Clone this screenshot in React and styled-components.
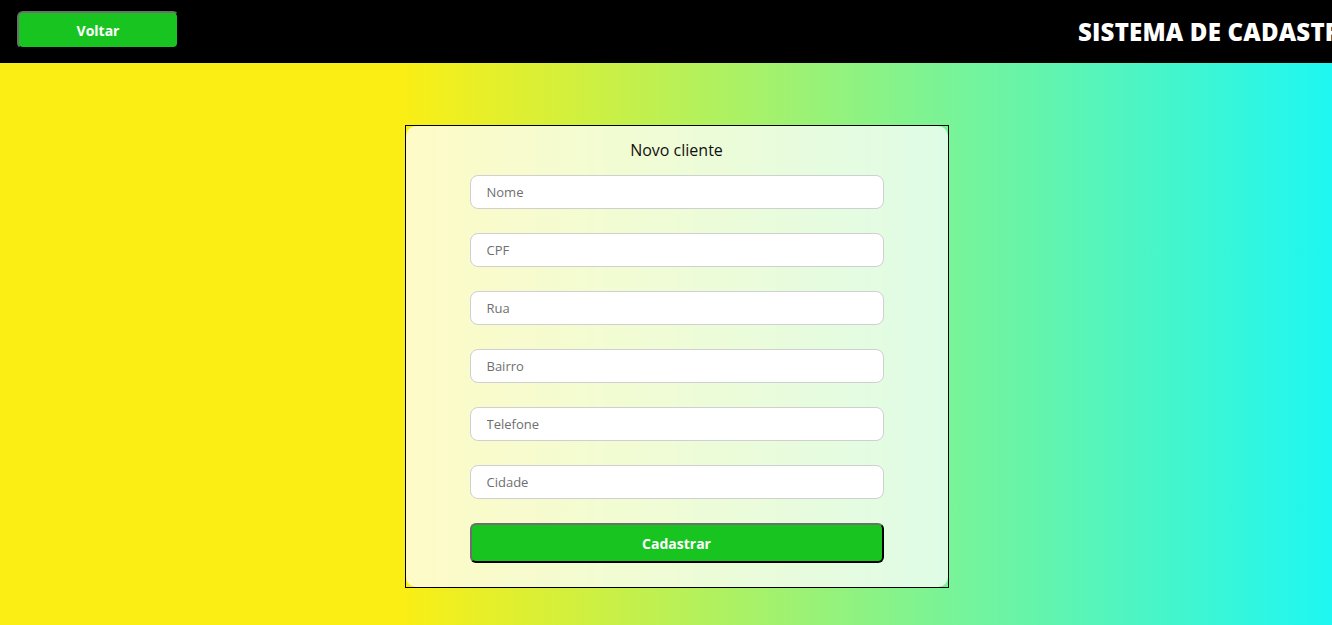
import styled, { createGlobalStyle } from 'styled-components';

const GlobalStyle = createGlobalStyle`
  * {
    box-sizing: border-box;
  }
  body {
    margin: 0;
    font-family: "Open Sans", "DejaVu Sans", sans-serif;
    overflow: hidden;
  }
`;

const Page = styled.div`
  width: 100%;
  height: 625px;
  display: flex;
  flex-direction: column;
`;

const Header = styled.header`
  height: 63px;
  background: #000;
  display: flex;
  align-items: flex-start;
  padding: 11px 0 0 17px;
  overflow: hidden;
  flex-shrink: 0;
`;

const Button = styled.button`
  height: ${(p) => (p.$big ? '40px' : '38px')};
  width: ${(p) => (p.$big ? '414px' : '162px')};
  background: #18c520;
  color: #fff;
  border: 2px outset #6e6e6e;
  border-right-color: ${(p) => (p.$big ? '#2a2a2a' : '#555')};
  border-bottom-color: ${(p) => (p.$big ? '#2a2a2a' : '#555')};
  border-radius: 6px;
  font-family: "Open Sans", "DejaVu Sans", sans-serif;
  font-weight: 700;
  font-size: 14px;
  cursor: pointer;
  flex-shrink: 0;
`;

const Title = styled.h1`
  margin: 8px 0 0 899px;
  color: #fff;
  font-size: 24px;
  line-height: 26px;
  font-weight: 800;
  white-space: nowrap;
  letter-spacing: 0.2px;
`;

const Main = styled.main`
  flex: 1;
  background: linear-gradient(to right, #fbee14 30%, #1ef7f2 100%);
  display: flex;
  justify-content: center;
  padding: 62px 0 0 21px;
`;

const Card = styled.div`
  width: 544px;
  height: 463px;
  border: 1px solid #000;
`;

const Panel = styled.form`
  height: 100%;
  background: rgba(255, 255, 255, 0.76);
  border-radius: 10px;
  display: flex;
  flex-direction: column;
  align-items: center;
  padding: 12px 0 23px;
`;

const FormTitle = styled.h2`
  margin: 0 0 13px;
  font-size: 16px;
  font-weight: 400;
  line-height: 24px;
  color: #111;
`;

const Fields = styled.div`
  display: flex;
  flex-direction: column;
  gap: 24px;
  margin-bottom: 24px;
`;

const Input = styled.input`
  width: 414px;
  height: 34px;
  border: 1px solid #cfcfd4;
  border-radius: 8px;
  background: #fff;
  padding: 0 16px;
  font-family: "Open Sans", "DejaVu Sans", sans-serif;
  font-size: 13px;
  outline: none;
  &::placeholder {
    color: #6f6f6f;
  }
`;

const fields = ['Nome', 'CPF', 'Rua', 'Bairro', 'Telefone', 'Cidade'];

export default function App() {
  return (
    <>
      <GlobalStyle />
      <Page>
        <Header>
          <Button type="button">Voltar</Button>
          <Title>SISTEMA DE CADASTRO DE CLIENTES</Title>
        </Header>
        <Main>
          <Card>
            <Panel onSubmit={(e) => e.preventDefault()}>
              <FormTitle>Novo cliente</FormTitle>
              <Fields>
                {fields.map((f) => (
                  <Input key={f} placeholder={f} />
                ))}
              </Fields>
              <Button $big type="submit">Cadastrar</Button>
            </Panel>
          </Card>
        </Main>
      </Page>
    </>
  );
}
